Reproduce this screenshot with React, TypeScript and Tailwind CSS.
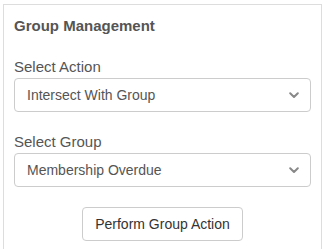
import React from 'react';

function Chevron() {
  return (
    <svg width="10" height="7" viewBox="0 0 10 7" fill="none" className="shrink-0">
      <path d="M1.2 1.3 L5 5 L8.8 1.3" stroke="#888" strokeWidth="2" strokeLinecap="round" strokeLinejoin="round" />
    </svg>
  );
}

function SelectBox({ value }: { value: string }) {
  return (
    <div className="flex h-[34px] w-full items-center justify-between rounded-[4px] border border-[#ccc] bg-white pl-[12px] pr-[11px] text-[14px] text-[#555]">
      <span>{value}</span>
      <Chevron />
    </div>
  );
}

function App() {
  return (
    <div className="h-[249px] w-[323px] bg-white" style={{ fontFamily: '"Liberation Sans", Arial, sans-serif' }}>
      <div className="ml-[3px] h-full w-[319px] border-x border-[#ddd]">
        <div className="mt-[4px] border-t border-[#ddd] px-[10px] pt-[11px]">
          <h3 className="text-[15px] font-bold leading-[20px] text-[#555]">Group Management</h3>

          <label className="mt-[21px] mb-[1px] block text-[15px] leading-[20px] text-[#555]">Select Action</label>
          <SelectBox value="Intersect With Group" />

          <label className="mt-[20px] mb-[1px] block text-[15px] leading-[20px] text-[#555]">Select Group</label>
          <SelectBox value="Membership Overdue" />

          <div className="mt-[20px] flex justify-center">
            <button className="h-[34px] w-[161px] rounded-[4px] border border-[#ccc] bg-white text-[14px] text-[#333]">
              Perform Group Action
            </button>
          </div>
        </div>
      </div>
    </div>
  );
}

export default App;
